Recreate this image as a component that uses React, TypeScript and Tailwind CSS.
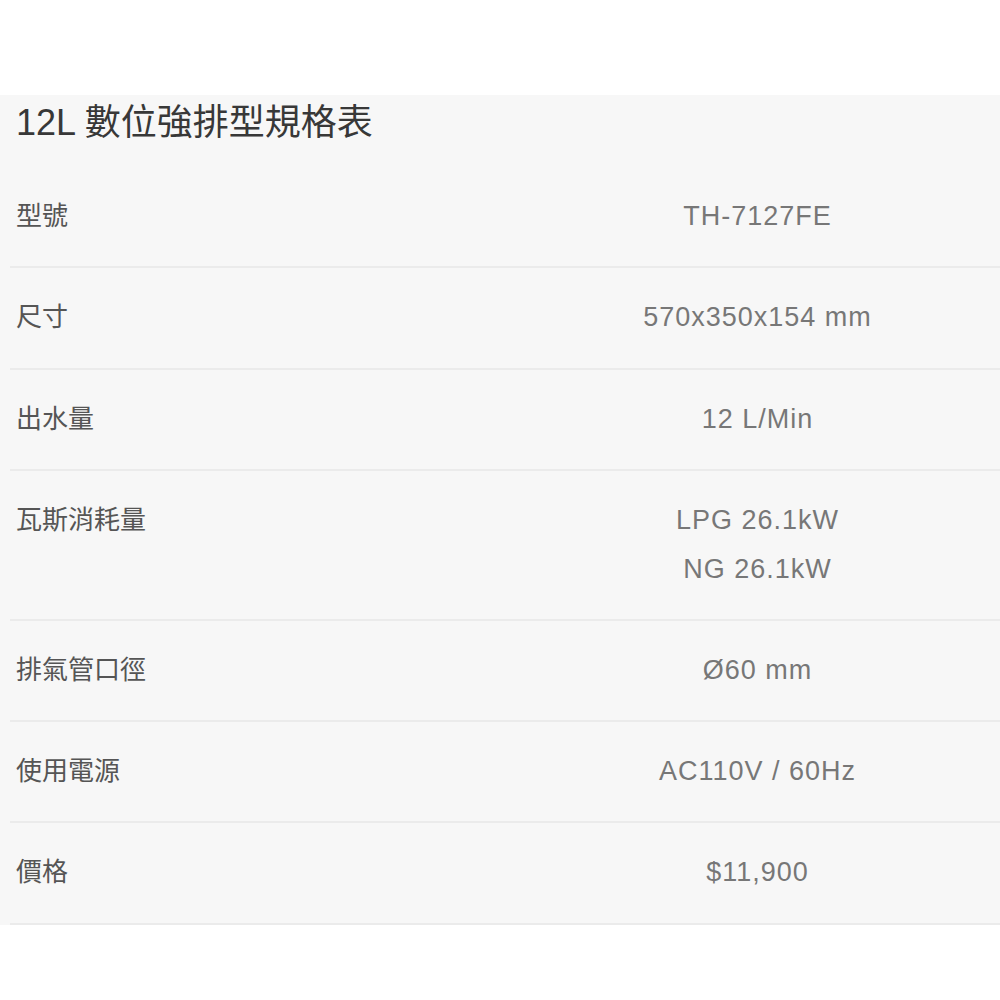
const specs: { label: string; values: string[] }[] = [
  { label: "型號", values: ["TH-7127FE"] },
  { label: "尺寸", values: ["570x350x154 mm"] },
  { label: "出水量", values: ["12 L/Min"] },
  { label: "瓦斯消耗量", values: ["LPG 26.1kW", "NG 26.1kW"] },
  { label: "排氣管口徑", values: ["Ø60 mm"] },
  { label: "使用電源", values: ["AC110V / 60Hz"] },
  { label: "價格", values: ["$11,900"] },
];

export default function App() {
  return (
    <div
      className="min-h-screen w-[1000px] bg-white pt-[95px]"
      style={{ fontFamily: '"Liberation Sans", "Noto Sans CJK TC", sans-serif' }}
    >
      <section className="bg-[#f7f7f7] pl-[10px]">
        <h1 className="h-[72px] pl-[6px] text-[36px] leading-[56px] text-[#383838]">
          12L 數位強排型規格表
        </h1>
        <div>
          {specs.map((row) => (
            <div
              key={row.label}
              className="grid grid-cols-[505px_1fr] border-b-2 border-[#ebebeb] pt-[25px] pb-[25.4px]"
            >
              <div className="pl-[6px] text-[26px] leading-[49px] text-[#555555]">
                {row.label}
              </div>
              <div className="flex flex-col items-center">
                {row.values.map((v) => (
                  <span
                    key={v}
                    className="text-[27px] leading-[48.5px] tracking-[1px] text-[#777777]"
                  >
                    {v}
                  </span>
                ))}
              </div>
            </div>
          ))}
        </div>
      </section>
    </div>
  );
}
